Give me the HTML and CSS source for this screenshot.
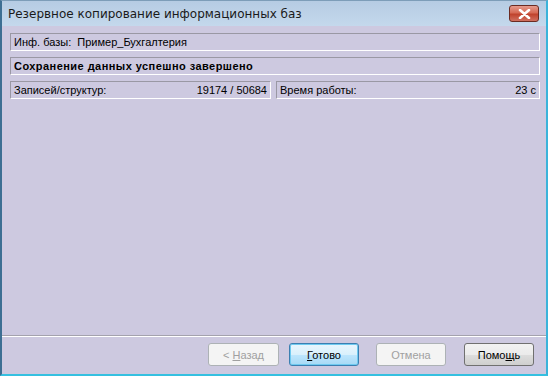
FILE: index.html
```html
<!DOCTYPE html>
<html lang="ru">
<head>
    <meta charset="UTF-8">
    <title>Резервное копирование информационных баз</title>
    <link rel="stylesheet" href="styles.css">
</head>
<body>
    <div class="window">
        <div class="titlebar">
            <span class="title">Резервное копирование информационных баз</span>
            <button class="close-btn" aria-label="Закрыть">
                <svg width="13" height="10" viewBox="0 0 13 10">
                    <path d="M2 1 L11 9 M11 1 L2 9" stroke="#fff" stroke-width="2.6" stroke-linecap="round"/>
                </svg>
            </button>
        </div>
        <div class="content">
            <div class="field">Инф. базы:&nbsp; Пример_Бухгалтерия</div>
            <div class="field bold">Сохранение данных успешно завершено</div>
            <div class="row">
                <div class="field stat"><span>Записей/структур:</span><span>19174 / 50684</span></div>
                <div class="field stat"><span>Время работы:</span><span>23 с</span></div>
            </div>
        </div>
        <div class="footer">
            <button class="btn btn-back" disabled>&lt; <u>Н</u>азад</button>
            <button class="btn btn-done"><u>Г</u>отово</button>
            <button class="btn btn-cancel" disabled>Отмена</button>
            <button class="btn btn-help">Помо<u>щ</u>ь</button>
        </div>
    </div>
</body>
</html>
```

FILE: styles.css
```css
body {
    margin: 0;
    width: 548px;
    height: 376px;
    overflow: hidden;
    font-family: "Liberation Sans", Arial, sans-serif;
    font-size: 11px;
}

.window {
    box-sizing: border-box;
    width: 548px;
    height: 376px;
    display: flex;
    flex-direction: column;
    background: #cdc9e0;
    border-left: 2px solid #3d6f93;
    border-right: 2px solid #3ab3da;
    border-bottom: 2px solid #35c0e0;
    border-top: 1px solid #7d9db8;
}

.titlebar {
    height: 25px;
    display: flex;
    align-items: center;
    justify-content: space-between;
    padding: 0 7px 0 6px;
    background: linear-gradient(to bottom, #b6cce3, #c4d8ec);
    flex-shrink: 0;
}

.title {
    font-family: "DejaVu Sans", sans-serif;
    font-size: 12px;
    color: #1a1a1a;
}

.close-btn {
    width: 30px;
    height: 17px;
    align-self: flex-start;
    margin-top: 4px;
    border: 1px solid #6b2b22;
    border-radius: 3px;
    background: linear-gradient(to bottom, #e59b8e 0%, #d66a55 45%, #c0432d 55%, #d07060 100%);
    display: flex;
    align-items: center;
    justify-content: center;
    padding: 0;
}

.content {
    flex: 1;
    padding: 7px 6px 0 8px;
    display: flex;
    flex-direction: column;
    gap: 6px;
}

.field {
    height: 18px;
    box-sizing: border-box;
    border-top: 1px solid #9a98a4;
    border-left: 1px solid #9a98a4;
    border-right: 1px solid #ffffff;
    border-bottom: 1px solid #ffffff;
    padding: 0 3px;
    display: flex;
    align-items: center;
    color: #000;
    white-space: pre;
}

.bold {
    font-weight: bold;
    letter-spacing: 0.45px;
}

.row {
    display: flex;
    gap: 5px;
}

.stat {
    justify-content: space-between;
}

.stat:first-child {
    width: 261px;
}

.stat:last-child {
    flex: 1;
}

.footer {
    height: 31px;
    flex-shrink: 0;
    border-top: 1px solid #a4a2ad;
    box-shadow: inset 0 1px 0 #ffffff;
    display: flex;
    align-items: flex-start;
    padding: 7px 0 0 206px;
}

.btn {
    width: 70px;
    height: 23px;
    box-sizing: border-box;
    border: 1px solid #707070;
    border-radius: 3px;
    background: linear-gradient(to bottom, #f2f2f2 0%, #ebebeb 50%, #dddddd 51%, #cfcfcf 100%);
    font-family: "Liberation Sans", Arial, sans-serif;
    font-size: 11px;
    color: #000;
    padding: 0;
}

.btn-back {
    width: 71px;
    margin-right: 10px;
}

.btn-done {
    margin-right: 17px;
}

.btn-cancel {
    margin-right: 18px;
}

.btn:disabled {
    border-color: #adb2b5;
    background: #f4f4f4;
    color: #a0a0a0;
}

.btn-done {
    border-color: #3c7fb1;
    box-shadow: inset 0 0 0 1px #6fcaf0;
    background: linear-gradient(to bottom, #eaf6fd 0%, #d9f0fc 50%, #bee6fd 51%, #a7d9f5 100%);
}

u {
    text-decoration: underline;
}
```
